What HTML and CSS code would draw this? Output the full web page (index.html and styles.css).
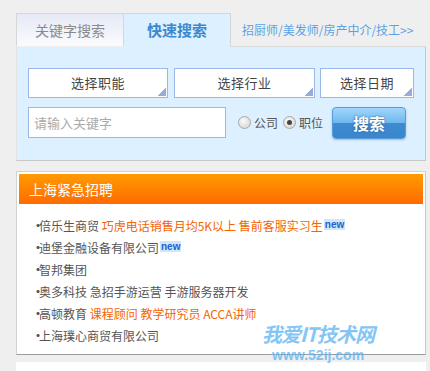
FILE: index.html
```html
<!DOCTYPE html>
<html lang="zh-CN">
<head>
	<meta charset="UTF-8">
	<title>上海紧急招聘</title>
	<link rel="stylesheet" href="styles.css">
</head>
<body>
	<div class="page">
		<!-- 搜索 -->
		<div class="search">
			<div class="tabs">
				<div class="tab">关键字搜索</div>
				<div class="tab active">快速搜索</div>
				<a class="tab-link" href="#">招厨师/美发师/房产中介/技工&gt;&gt;</a>
			</div>
			<div class="search-body">
				<div class="row">
					<div class="select w1">选择职能</div>
					<div class="select w2">选择行业</div>
					<div class="select w3">选择日期</div>
				</div>
				<div class="row row2">
					<div class="keyword">请输入关键字</div>
					<label class="radio"><span class="dot"></span>公司</label>
					<label class="radio"><span class="dot on"></span>职位</label>
					<div class="btn">搜索</div>
				</div>
			</div>
		</div>

		<!-- 紧急招聘 -->
		<div class="urgent">
			<div class="urgent-title">上海紧急招聘</div>
			<ul class="jobs">
				<li>倍乐生商贸 <a class="hot" href="#">巧虎电话销售月均5K以上</a> <a class="hot" href="#">售前客服实习生</a><span class="new">new</span></li>
				<li>迪堡金融设备有限公司<span class="new">new</span></li>
				<li>智邦集团</li>
				<li>奥多科技 急招手游运营 手游服务器开发</li>
				<li>高顿教育 <a class="hot" href="#">课程顾问</a> <a class="hot" href="#">教学研究员</a> <a class="hot" href="#">ACCA讲师</a></li>
				<li>上海璞心商贸有限公司</li>
			</ul>
		</div>
		<div class="next"></div>

		<div class="mark">
			<div class="mark-title">我爱IT技术网</div>
			<div class="mark-url">www.52ij.com</div>
		</div>
	</div>
</body>
</html>
```

FILE: styles.css
```css
body {
    margin: 0;
    padding: 0;
    background-color: #efefef;
    font-family: "Noto Sans CJK SC", "Liberation Sans", sans-serif;
    color: #555;
    overflow: hidden;
}
a {
    text-decoration: none;
}
.page {
    position: relative;
    width: 410px;
    padding: 13px 0 0 16px;
    height: 358px;
}
.tabs {
    display: flex;
    height: 34px;
}
.tab {
    width: 106px;
    height: 32px;
    border: 1px solid #d6d6d6;
    border-bottom: none;
    background: linear-gradient(#e6eaf6, #fafbfe);
    color: #8a8a8a;
    font-size: 14px;
    line-height: 32px;
    text-align: center;
}
.tab.active {
    width: 106px;
    height: 33px;
    border-left: none;
    background: #dcf0ff;
    color: #3c88cf;
    font-size: 15px;
    font-weight: bold;
}
.tab-link {
    flex: 1;
    color: #5aa2e4;
    font-size: 12px;
    line-height: 34px;
    padding-left: 11px;
    border-bottom: 1px solid #d8d8d8;
    height: 33px;
}
.search-body {
    background: #dcf0ff;
    border: 1px solid #c8c8c8;
    border-left-color: #e2e2e2;
    border-top: none;
    padding: 21px 0 21px 11px;
}
.row {
    display: flex;
    align-items: center;
}
.row2 {
    margin-top: 7px;
}
.select {
    position: relative;
    box-sizing: border-box;
    height: 30px;
    border: 1px solid #9db6ea;
    background: #fff;
    font-size: 13px;
    color: #444;
    line-height: 28px;
    text-align: center;
    letter-spacing: 0.5px;
}
.select::after {
    content: "";
    position: absolute;
    right: 1px;
    bottom: 1px;
    width: 8px;
    height: 8px;
    background: linear-gradient(135deg, transparent 50%, #97acd6 50%);
}
.w1 { width: 140px; margin-right: 6px; }
.w2 { width: 141px; margin-right: 5px; }
.w3 { width: 94px; }
.keyword {
    box-sizing: border-box;
    width: 198px;
    height: 31px;
    border: 1px solid #9db6ea;
    background: #fff;
    color: #aaa;
    font-size: 13px;
    line-height: 29px;
    padding-left: 5px;
}
.radio {
    display: flex;
    align-items: center;
    font-size: 12px;
    color: #555;
    margin-left: 12px;
}
.radio + .radio {
    margin-left: 5px;
}
.dot {
    box-sizing: border-box;
    width: 13px;
    height: 13px;
    border: 1px solid #a8a8a8;
    border-radius: 50%;
    background: radial-gradient(circle at 40% 35%, #fafafa, #cfcfcf);
    margin-right: 3px;
    display: flex;
    align-items: center;
    justify-content: center;
}
.dot.on::after {
    content: "";
    width: 5px;
    height: 5px;
    border-radius: 50%;
    background: #444;
}
.btn {
    box-sizing: border-box;
    width: 74px;
    height: 32px;
    margin: 2px 0 0 9px;
    border: 1px solid #5b9bd9;
    border-radius: 4px;
    background: linear-gradient(#a2d6fb, #6cb7ef 50%, #3f8ad0 50%, #3a86cc);
    box-shadow: 0 1px 2px rgba(60, 110, 170, 0.4);
    color: #fff;
    font-size: 16px;
    font-weight: bold;
    line-height: 30px;
    text-align: center;
    text-shadow: 0 0 2px #1d4f8a;
}
.urgent {
    margin-top: 10px;
    border: 1px solid #d2d2d2;
    border-right-color: #c8c8c8;
    border-bottom-color: #9c9c9c;
    background: #fff;
    padding: 2px 2px 7px;
}
.urgent-title {
    height: 30px;
    background: linear-gradient(#ff9c00, #ff6a00);
    color: #fff;
    font-size: 14px;
    line-height: 30px;
    padding-left: 10px;
}
.jobs {
    list-style: none;
    margin: 11px 0 0;
    padding: 0 0 0 13px;
    font-size: 12px;
    line-height: 22px;
    color: #555;
}
.jobs li::before {
    content: "·";
    display: inline-block;
    width: 7px;
    font-weight: bold;
}
.hot {
    color: #f56400;
}
.new {
    font-family: "Liberation Sans", sans-serif;
    font-size: 10px;
    font-weight: bold;
    color: #1f5fd0;
    background: #cfe6fb;
    padding: 0 1px;
    margin-left: 1px;
    vertical-align: 3px;
    line-height: 11px;
}
.next {
    margin-top: 7px;
    height: 20px;
    background: #fff;
}
.mark {
    position: absolute;
    left: 262px;
    top: 322px;
    color: #5ab4f4;
    opacity: 0.75;
    text-align: center;
}
.mark-title {
    font-size: 20px;
    font-weight: bold;
    font-style: italic;
    line-height: 24px;
    letter-spacing: -1px;
}
.mark-url {
    margin-top: 2px;
    font-family: "Liberation Sans", sans-serif;
    font-size: 14px;
    font-weight: bold;
    line-height: 14px;
}
```
